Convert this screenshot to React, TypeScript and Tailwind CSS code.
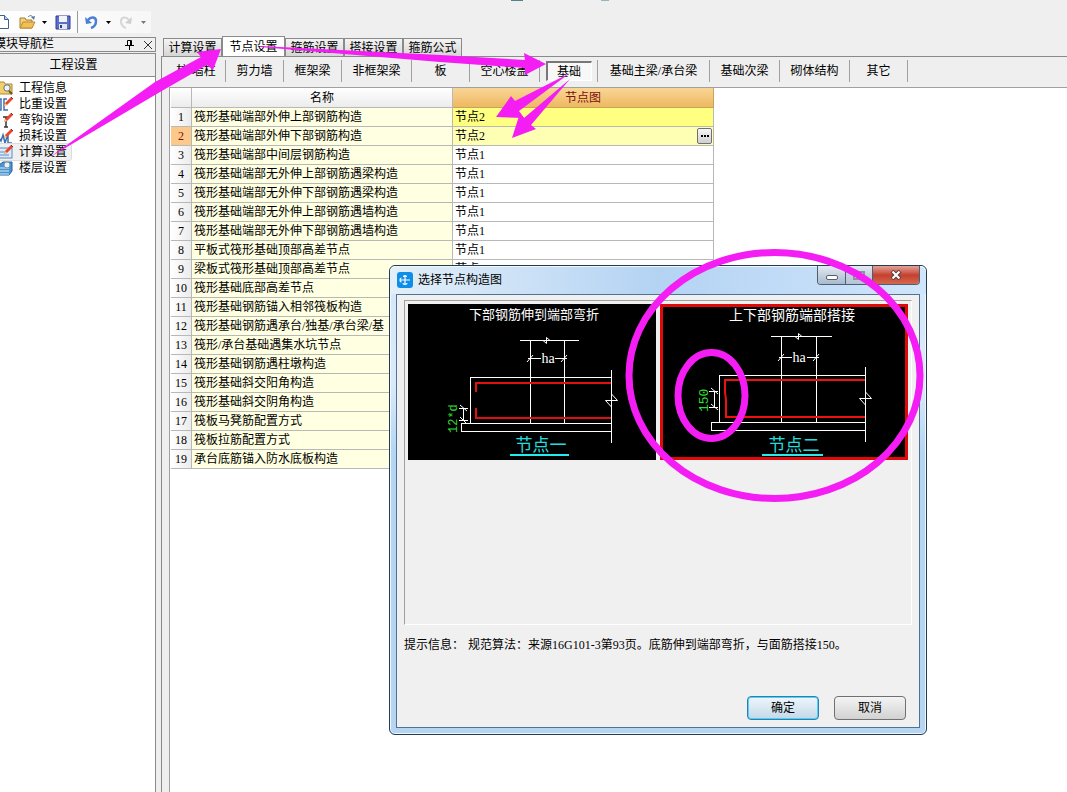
import { useState } from "react";
import type { ReactNode } from "react";
import clsx from "clsx";

const NAV_ITEMS = ["工程信息", "比重设置", "弯钩设置", "损耗设置", "计算设置", "楼层设置"];

const TABS = ["计算设置", "节点设置", "箍筋设置", "搭接设置", "箍筋公式"];

const CATEGORIES = [
  { label: "柱/墙柱", width: "w-[59px]" },
  { label: "剪力墙", width: "w-[58px]" },
  { label: "框架梁", width: "w-[58px]" },
  { label: "非框架梁", width: "w-[70px]" },
  { label: "板", width: "w-[58px]" },
  { label: "空心楼盖", width: "w-[70px]" },
  { label: "基础", width: "w-[58px]" },
  { label: "基础主梁/承台梁", width: "w-[112px]" },
  { label: "基础次梁", width: "w-[70px]" },
  { label: "砌体结构", width: "w-[70px]" },
  { label: "其它", width: "w-[58px]" },
];

const ROWS = [
  { name: "筏形基础端部外伸上部钢筋构造", node: "节点2" },
  { name: "筏形基础端部外伸下部钢筋构造", node: "节点2" },
  { name: "筏形基础端部中间层钢筋构造", node: "节点1" },
  { name: "筏形基础端部无外伸上部钢筋遇梁构造", node: "节点1" },
  { name: "筏形基础端部无外伸下部钢筋遇梁构造", node: "节点1" },
  { name: "筏形基础端部无外伸上部钢筋遇墙构造", node: "节点1" },
  { name: "筏形基础端部无外伸下部钢筋遇墙构造", node: "节点1" },
  { name: "平板式筏形基础顶部高差节点", node: "节点1" },
  { name: "梁板式筏形基础顶部高差节点", node: "节点1" },
  { name: "筏形基础底部高差节点", node: "节点1" },
  { name: "筏形基础钢筋锚入相邻筏板构造", node: "节点1" },
  { name: "筏形基础钢筋遇承台/独基/承台梁/基", node: "节点1" },
  { name: "筏形/承台基础遇集水坑节点", node: "节点1" },
  { name: "筏形基础钢筋遇柱墩构造", node: "节点1" },
  { name: "筏形基础斜交阳角构造", node: "节点1" },
  { name: "筏形基础斜交阴角构造", node: "节点1" },
  { name: "筏板马凳筋配置方式", node: "节点1" },
  { name: "筏板拉筋配置方式", node: "节点1" },
  { name: "承台底筋锚入防水底板构造", node: "节点1" },
];

const HINT_LABEL = "提示信息\uFF1A";
const HINT_TEXT = "规范算法\uFF1A来源16G101-3第93页。底筋伸到端部弯折\uFF0C与面筋搭接150。";

const Caret = ({ color = "#000" }: { color?: string }) => (
  <svg className="h-[3px] w-[5px]" viewBox="0 0 5 3">
    <path d="M0 0h5L2.5 3z" fill={color} />
  </svg>
);

const Pencil = () => (
  <>
    <path d="M6 10l1-3 6-6 2 2-6 6z" fill="#e8452c" />
    <path d="M6 10l1-3 2 2z" fill="#f4cfa0" />
    <path d="M13 1l2 2" stroke="#8c2312" />
  </>
);

// One drawing per entry of NAV_ITEMS
const NAV_ICONS: ReactNode[] = [
  <>
    <path d="M0 2h6l1 2h7v10H0z" fill="#f1cf6b" stroke="#b08a2c" />
    <circle cx="9" cy="8" r="3.2" fill="#e8f4ff" stroke="#6d6d6d" />
    <path d="M11 11l3 3" stroke="#6d5320" strokeWidth="2" />
  </>,
  <>
    <path d="M0 3h3v11H0M9 3H6v11h4M6 8h3" fill="none" stroke="#3b6fb5" strokeWidth="1.5" />
    <Pencil />
  </>,
  <>
    <path d="M5 5h6M8 5v10M6 15h4" fill="none" stroke="#333" strokeWidth="1.5" />
    <Pencil />
  </>,
  <>
    <path d="M0 8l3 5 2-6 2 8 3-9v9h4" fill="none" stroke="#3b6fb5" strokeWidth="1.5" />
    <Pencil />
  </>,
  <>
    <rect x="0" y="4" width="14" height="10" fill="#dcebfa" stroke="#5c8ac0" />
    <path d="M2 8h5M2 11h9" stroke="#5c8ac0" />
    <Pencil />
  </>,
  <>
    <path d="M1 5l4-3h9v9l-3 4H1z" fill="#4b93cf" stroke="#22629c" />
    <path d="M2 8h9M2 11h9M2 14h9" stroke="#d8eefc" />
    <circle cx="9" cy="5" r="3" fill="#e4f4fd" stroke="#7b94a6" />
  </>,
];

const Toolbar = () => (
  <header className="h-[37px] bg-[#efefef]">
    <div className="flex h-[11px] items-start pl-[511px]">
      <span className="h-px w-3 bg-[#55808f]" />
      <span className="ml-[78px] h-px w-2 bg-[#9cb4bd]" />
    </div>
    <div className="flex h-[22px] w-[151px] items-center bg-gradient-to-r from-white to-[#f7f7f7]">
      <button type="button" aria-label="新建" className="-ml-1">
        <svg className="h-4 w-[13px]" viewBox="0 0 13 16">
          <path d="M0 1.500h8.500l4 4v9H0z" fill="#fff" stroke="#3c5f96" />
          <path d="M8.500 1.500v4h4" fill="#bcd0ec" stroke="#3c5f96" />
        </svg>
      </button>
      <button type="button" aria-label="打开" className="ml-2.5">
        <svg className="h-4 w-[17px]" viewBox="0 0 17 16">
          <path d="M1 4h5l1 2h6v8H1z" fill="#f3d27a" stroke="#a5802b" />
          <path d="M1 14l3-6h12l-3 6z" fill="#f0bf55" stroke="#b98d31" />
          <path d="M9 3c2-2 4-2 5 1" fill="none" stroke="#57779f" />
          <path d="M12 3l3 3 1-4z" fill="#57779f" />
        </svg>
      </button>
      <button type="button" aria-label="打开选项" className="ml-1.5">
        <Caret />
      </button>
      <button type="button" aria-label="保存" className="ml-2">
        <svg className="h-4 w-4" viewBox="0 0 16 16">
          <path d="M1 2h14v13H1z" fill="#5d6fc6" stroke="#2e3f92" />
          <path d="M4 2h8v6H4z" fill="#f1f5fb" />
          <path d="M4 10h8v5H4z" fill="#e3e7f2" />
          <path d="M5 11h2v3H5z" fill="#273d86" />
        </svg>
      </button>
      <span className="ml-1.5 h-[22px] w-px bg-[#9a9a9a]" />
      <button type="button" aria-label="撤销" className="ml-1.5">
        <svg className="h-4 w-[14px]" viewBox="0 0 14 16">
          <path d="M4 6c3-4 8-3 8 1 0 3-2 6-5 7" fill="none" stroke="#4a7fd6" strokeWidth="2.5" />
          <path d="M1 3l1 7 6-1z" fill="#4a7fd6" />
        </svg>
      </button>
      <button type="button" aria-label="撤销选项" className="ml-2">
        <Caret />
      </button>
      <button type="button" aria-label="恢复" className="ml-2">
        <svg className="h-4 w-[14px]" viewBox="0 0 14 16">
          <path d="M10 6C7 2 2 3 2 7c0 3 2 6 5 7" fill="none" stroke="#d6d6d6" strokeWidth="2" />
          <path d="M13 3l-1 7-6-1z" fill="#cfcfcf" />
        </svg>
      </button>
      <button type="button" aria-label="恢复选项" className="ml-2">
        <Caret color="#777" />
      </button>
    </div>
  </header>
);

const Sidebar = () => (
  <aside className="flex w-[156px] shrink-0 flex-col">
    <div className="flex h-[15px] items-center border border-l-0 border-[#8a8a8a] bg-[#f0f0f0]">
      <span className="-ml-1.5 flex-1 leading-[13px]">模块导航栏</span>
      <button type="button" aria-label="固定">
        <svg className="h-[11px] w-[9px]" viewBox="0 0 9 11">
          <path d="M2.500 6V1.500h4V6M0 6.500h9M4.500 7v4" fill="none" stroke="#000" />
          <path d="M5 2h1.500v4H5z" />
        </svg>
      </button>
      <button type="button" aria-label="关闭" className="mr-[3px] ml-2.5">
        <svg className="h-2 w-2" viewBox="0 0 8 8">
          <path d="M0 0l8 8M8 0L0 8" stroke="#333" />
        </svg>
      </button>
    </div>
    <h2 className="mt-px flex h-6 items-center justify-center border border-l-0 border-[#8a8a8a] bg-[#efefef] pr-2">
      工程设置
    </h2>
    <ul className="flex-1 border-r border-[#8a8a8a] bg-white pt-[3px]">
      {NAV_ITEMS.map((item, i) => (
        <li key={item} className="h-4">
          <button
            type="button"
            className={clsx(
              "flex h-4 items-center rounded-r-xs pr-1 leading-4",
              item === "计算设置" && "bg-[#f0f0f0] outline outline-[#dcdcdc]"
            )}
          >
            <svg className="-ml-0.5 h-4 w-4" viewBox="0 0 16 16">
              {NAV_ICONS[i]}
            </svg>
            <span className="ml-[5px]">{item}</span>
          </button>
        </li>
      ))}
    </ul>
  </aside>
);

const TabBar = () => {
  const [active, setActive] = useState("节点设置");

  return (
    <div role="tablist" className="flex h-[19px] items-end pl-0.5">
      {TABS.map((tab) => (
        <button
          key={tab}
          type="button"
          role="tab"
          aria-selected={tab === active}
          onClick={() => setActive(tab)}
          className={clsx(
            "border border-b-0 border-[#8a8a8a]",
            tab === active
              ? "h-5 w-[63px] bg-white leading-[18px]"
              : "h-[18px] w-[59px] bg-gradient-to-b from-[#f4f4f4] to-[#d6d6d6] leading-[18px]"
          )}
        >
          {tab}
        </button>
      ))}
    </div>
  );
};

const CategoryBar = () => {
  const [active, setActive] = useState("基础");

  return (
    <div className="h-[31px] border-t border-[#8a8a8a] bg-[#efefef] pl-[5px]">
      <div className="flex pt-[3px]">
        {CATEGORIES.map(({ label, width }) => (
          <div key={label} className={clsx("flex h-[22px] shrink-0 justify-center border-r border-[#a0a0a0]", width)}>
            <button
              type="button"
              onClick={() => setActive(label)}
              className={clsx(
                "whitespace-nowrap",
                label === active
                  ? "mt-px h-5 w-[46px] border border-t-2 border-l-2 border-[#fff] border-t-[#777] border-l-[#777] bg-[#f8f8f8] leading-4"
                  : "h-[21px]"
              )}
            >
              {label}
            </button>
          </div>
        ))}
      </div>
    </div>
  );
};

const NodeTable = () => (
  <table className="w-[543px] table-fixed border-separate border-spacing-0">
    <thead>
      <tr className="h-5">
        <th className="w-[21px] border-r border-b border-[#b8b8b8] bg-gradient-to-b from-white to-[#ececec] p-0" />
        <th className="border-r border-b border-[#b8b8b8] bg-gradient-to-b from-white to-[#ececec] p-0 font-normal">
          名称
        </th>
        <th className="border-r border-b border-[#c9a35c] bg-gradient-to-b from-[#f9d596] to-[#eeb95f] p-0 font-normal text-[#7a1010]">
          节点图
        </th>
      </tr>
    </thead>
    <tbody>
      {ROWS.map(({ name, node }, i) => (
        <tr key={name} className="h-[19px]">
          <td
            className={clsx(
              "border-r border-b border-[#b8b8b8] p-0 text-center leading-[18px]",
              i === 1 ? "bg-[#fdc98a] text-[#7a1010]" : "bg-gradient-to-r from-white to-[#ececec]"
            )}
          >
            {i + 1}
          </td>
          <td className="overflow-hidden border-r border-b border-[#b8b8b8] bg-[#ffffe1] py-0 pr-0 pl-0.5 leading-[18px] whitespace-nowrap">
            {name}
          </td>
          <td
            className={clsx(
              "border-r border-b border-[#b8b8b8] py-0 pr-px pl-0.5 leading-[18px]",
              i === 0 && "bg-[#ffff80]",
              i === 1 && "bg-[#ffffb3]"
            )}
          >
            <div className="flex h-[18px] items-center justify-between">
              {node}
              {i === 1 && (
                <button
                  type="button"
                  aria-label="选择节点图"
                  className="flex h-4 w-[15px] items-center justify-center gap-px rounded-xs border border-[#707070] bg-gradient-to-b from-[#f6f6f6] to-[#d0d0d0]"
                >
                  <span className="size-0.5 bg-black" />
                  <span className="size-0.5 bg-black" />
                  <span className="size-0.5 bg-black" />
                </button>
              )}
            </div>
          </td>
        </tr>
      ))}
    </tbody>
  </table>
);

const DiagramOne = () => (
  <svg className="block h-[156px] w-full bg-black" viewBox="0 0 248 156">
    <text x="126" y="15" textAnchor="middle" fontSize="13" fill="#fff">
      下部钢筋伸到端部弯折
    </text>
    <g fill="none" stroke="#fff" shapeRendering="crispEdges">
      <path d="M112 36.500h59M122.500 36v83M156.500 36v83M120 54.500h13M147 54.500h12" />
      <path d="M203.500 73.500h-141v46M203.500 119.500h-150v8h150M203.500 66v73" />
      <path d="M55.500 104v13M51 104.500h9M51 116.500h9" />
    </g>
    <g fill="none" stroke="#fff">
      <path d="M135 36.500l3.500 3v-6l3.500 3M119 58l6-7M153 58l6-7" />
      <path d="M203.500 90l6 6.500h-12l6 6.500M52 101l7 6M52 113l7 7" />
    </g>
    <path d="M68 88v-9h135M68 104v10h135" fill="none" stroke="#e01010" strokeWidth="2" />
    <text x="140" y="59" textAnchor="middle" fontSize="14" fill="#fff">
      ha
    </text>
    <text transform="translate(49 129) rotate(-90)" fontSize="12" fill="#2fdc2f" className="font-['Liberation_Mono',monospace]">
      12*d
    </text>
    <text x="133" y="147" textAnchor="middle" fontSize="17" fill="#22dddd">
      节点一
    </text>
    <path d="M102 151h59" stroke="#22eeee" strokeWidth="2" />
  </svg>
);

const DiagramTwo = () => (
  <svg className="block h-[156px] w-full bg-black" viewBox="0 0 248 156">
    <text x="132" y="16" textAnchor="middle" fontSize="14" fill="#fff">
      上下部钢筋端部搭接
    </text>
    <g fill="none" stroke="#fff" shapeRendering="crispEdges">
      <path d="M111 32.500h61M121.500 32v86M156.500 32v86M119 53.500h13M147 53.500h12" />
      <path d="M205.500 71.500h-146v47M205.500 118.500h-154v8h154M205.500 63v75" />
      <path d="M54.500 87v17M49 87.500h9M49 103.500h9" />
    </g>
    <g fill="none" stroke="#fff">
      <path d="M135 32.500l3.500 3v-6l3.500 3M118 57l6-7M153 57l6-7" />
      <path d="M205.500 88l6 6.500h-12l6 6.500M51 84l7 6M51 100l7 6" />
    </g>
    <path d="M205 76H65v12l1 8v17h139" fill="none" stroke="#f01010" strokeWidth="2" />
    <text x="139" y="58" textAnchor="middle" fontSize="14" fill="#fff">
      ha
    </text>
    <text transform="translate(48 108) rotate(-90)" fontSize="13" fill="#2fdc2f" className="font-['Liberation_Mono',monospace]">
      150
    </text>
    <text x="134" y="147" textAnchor="middle" fontSize="17" fill="#22dddd">
      节点二
    </text>
    <path d="M102 151h61" stroke="#22eeee" strokeWidth="2" />
    <rect x="1.5" y="1.5" width="245" height="153" fill="none" stroke="#e00808" strokeWidth="3" />
  </svg>
);

const NodeDialog = () => (
  <section
    role="dialog"
    aria-label="选择节点构造图"
    className="absolute top-[265px] left-[389px] w-[538px] rounded-md border border-[#25394f] bg-gradient-to-b from-[#d3e6f8] via-[#dbeafa] via-25% to-[#b5d5f3] to-40% px-1.5 pb-1.5 shadow-[inset_0_0_0_1px_#f0f8ff]"
  >
    <div className="-mx-1.5 flex h-7 items-start rounded-t-md bg-gradient-to-r from-[#e3eff9] via-[#b4d3f3] via-50% to-[#cfe5fb] pr-1.5 pl-[7px] shadow-[inset_0_1px_0_#f0f8ff]">
      <svg className="mt-1.5 size-4" viewBox="0 0 16 16">
        <rect width="16" height="16" rx="3" fill="#0f8ee9" />
        <path d="M8 3.500v8.500M3.500 8H13M6.500 5c0-2 3-2 3 0M6 11c0 2 4 2 4 0M4.500 6c-2 0-2 4 0 4" fill="none" stroke="#fff" strokeWidth="1.2" />
      </svg>
      <h1 className="mt-1.5 ml-[5px] flex-1 leading-4">选择节点构造图</h1>
      <div className="flex h-[19px] overflow-hidden rounded-b-sm border border-t-0 border-[#4d5f74]">
        <button
          type="button"
          aria-label="最小化"
          className="flex w-7 items-end justify-center border-r border-[#4d5f74] bg-gradient-to-b from-[#e3ebf4] via-[#c5d1df] via-50% to-[#a9bacd] pb-1"
        >
          <span className="h-[5px] w-3 rounded-xs border border-[#555f6b] bg-white" />
        </button>
        <button
          type="button"
          aria-label="最大化"
          className="flex w-[27px] items-center justify-center border-r border-[#4d5f74] bg-gradient-to-b from-[#e3ebf4] via-[#c5d1df] via-50% to-[#b5c4d5]"
        >
          <span className="h-[9px] w-3 border-2 border-[#8a949f] bg-white" />
        </button>
        <button
          type="button"
          aria-label="关闭"
          className="flex w-[46px] items-center justify-center bg-gradient-to-b from-[#e2a29a] via-[#c4402f] via-50% to-[#d4664f]"
        >
          <svg className="h-[10px] w-3" viewBox="0 0 12 10">
            <path d="M2 1l8 8M10 1L2 9" stroke="#4c3a3a" strokeWidth="4" />
            <path d="M2.500 1.500l7 7M9.500 1.500l-7 7" stroke="#fff" strokeWidth="2.200" />
          </svg>
        </button>
      </div>
    </div>

    <div className="border border-[#4f7396] bg-[#f0f0f0] px-[7px] pt-[5px] pb-[7px]">
      <div className="grid h-[325px] grid-cols-2 content-start gap-1 border border-[#fff] border-t-[#a0a0a0] border-l-[#a0a0a0] p-[3px]">
        <button type="button" aria-label="节点一">
          <DiagramOne />
        </button>
        <button type="button" aria-label="节点二" aria-pressed="true">
          <DiagramTwo />
        </button>
      </div>
      <p className="mt-3 flex gap-1 leading-4 whitespace-nowrap">
        <span>{HINT_LABEL}</span>
        <span>{HINT_TEXT}</span>
      </p>
      <div className="mt-[43px] flex justify-end gap-[15px] pr-1.5">
        <button
          type="button"
          className="h-6 w-[72px] rounded-sm border border-[#2f7fae] bg-gradient-to-b from-[#eef6fb] to-[#c3d9e8] shadow-[inset_0_0_0_1px_#4fd2f5]"
        >
          确定
        </button>
        <button
          type="button"
          className="h-6 w-[72px] rounded-sm border border-[#707070] bg-gradient-to-b from-[#f4f4f4] to-[#d2d2d2]"
        >
          取消
        </button>
      </div>
    </div>
  </section>
);

// Markup drawn over the window to show the click order
const Annotations = () => (
  <svg className="pointer-events-none absolute top-0 left-0 h-[792px] w-[1067px]" viewBox="0 0 1067 792">
    <g fill="#f41df4">
      <path d="M50 157L155 82L201 57L197 52L221 49L213 70L207 65L160 92z" />
      <path d="M260 46L440 55L525 60L524 53L546 64L525 75V68L440 62L260 47z" />
      <path d="M570 73L515 101L511 96L496 117L524 118L519 111z" />
      <path d="M570 79L524 118L520 113L512 138L536 129L531 125z" />
    </g>
    <g fill="none" stroke="#f41df4" strokeWidth="7">
      <ellipse cx="774.5" cy="375.5" rx="145.500" ry="123" />
      <ellipse cx="711.5" cy="395.5" rx="33.500" ry="43" />
    </g>
  </svg>
);

const App = () => {
  return (
    <div className="relative flex min-h-screen flex-col overflow-hidden bg-[#efefef] font-['Liberation_Serif','Noto_Sans_CJK_SC',sans-serif] text-[12px] text-black">
      <Toolbar />
      <div className="flex flex-1 gap-[5px]">
        <Sidebar />
        <main className="flex min-w-0 flex-1 flex-col">
          <TabBar />
          <div className="flex flex-1 flex-col border-l border-[#8a8a8a]">
            <CategoryBar />
            <div className="ml-[7px] flex-1 border-t border-l border-[#a0a0a0] bg-white pl-px">
              <NodeTable />
            </div>
          </div>
        </main>
      </div>
      <NodeDialog />
      <Annotations />
    </div>
  );
};

export default App;
